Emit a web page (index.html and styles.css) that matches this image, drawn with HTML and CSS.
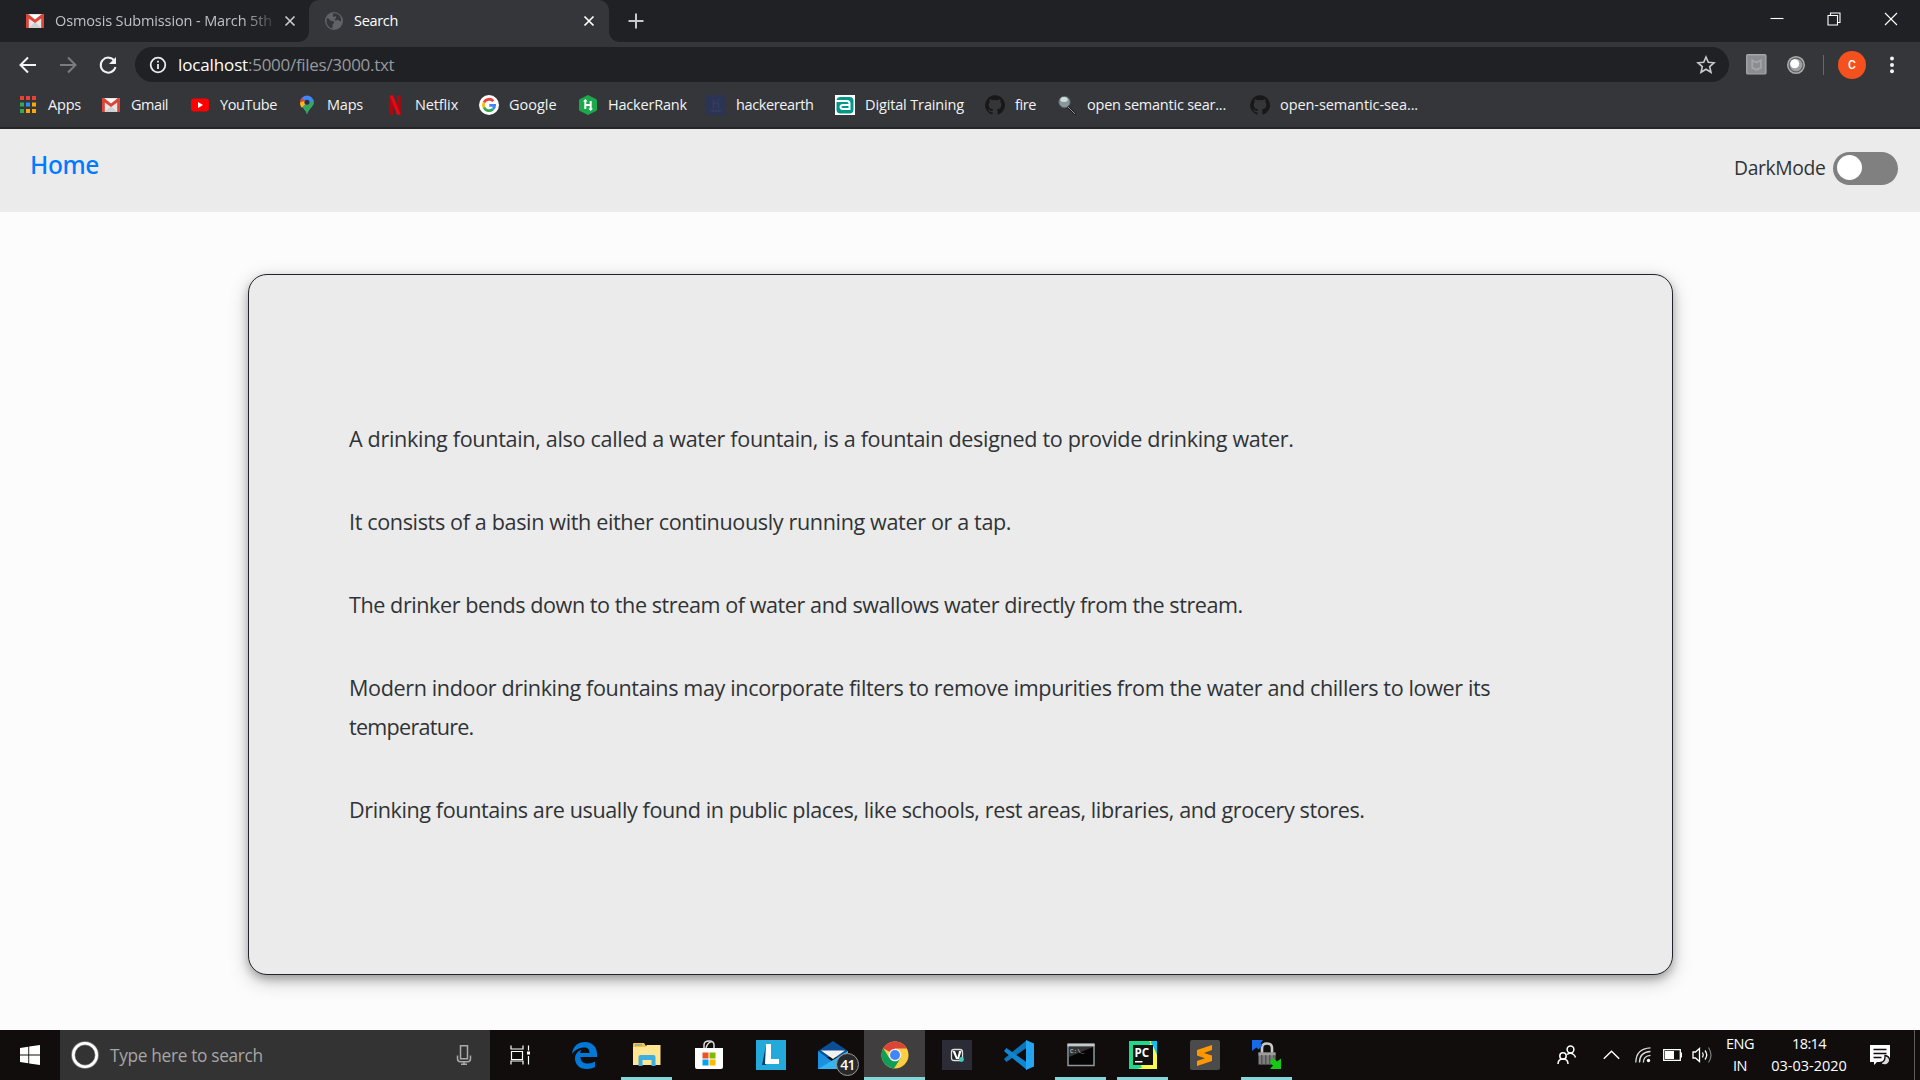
FILE: index.html
```html
<!DOCTYPE html>
<html lang="en">
<head>
<meta charset="utf-8">
<title>Search</title>
<link rel="stylesheet" href="styles.css">
</head>
<body>
<div class="screen">
  <div class="tabstrip">
    <div class="tab tab-idle">
      <svg class="tab-icon" viewBox="0 0 20 20"><use href="#gmail"/></svg>
      <span class="tab-title faded">Osmosis Submission - March 5th</span>
      <svg class="tab-close" viewBox="0 0 12 12"><path d="M1.5 1.5l9 9M10.5 1.5l-9 9"/></svg>
    </div>
    <div class="tab tab-active">
      <svg class="tab-icon globe" viewBox="0 0 20 20"><circle cx="10" cy="10" r="9" fill="#5f6368"/><path d="M3 7c3 0 2 3 5 3 2 0 3 2 1 3-1 1 0 3-1 4.500C3 16 1.800 11 3 7zM9 2.500c1 1-1 2 0 3 2 1 2-1 3 0 1 2-2 2-1 4 2 0 3-1 4 0l2 1C18 5 13 1.500 9 2.500z" fill="#35363a"/></svg>
      <span class="tab-title current">Search</span>
      <svg class="tab-close bright" viewBox="0 0 12 12"><path d="M1.500 1.500l9 9M10.500 1.500l-9 9"/></svg>
    </div>
    <svg class="new-tab" viewBox="0 0 16 16"><path d="M8 .5v15M.5 8h15"/></svg>
    <div class="window-buttons">
      <svg viewBox="0 0 14 14"><path d="M.5 6.500h13"/></svg>
      <svg viewBox="0 0 14 14"><path d="M1 3.500h9.500V13H1zM3.500 3.500V1H13v9.500h-2.500"/></svg>
      <svg viewBox="0 0 14 14"><path d="M1 1l12 12M13 1L1 13"/></svg>
    </div>
  </div>

  <div class="toolbar">
    <svg class="nav" viewBox="0 0 20 20"><path d="M18 10H3M10 2.500L2.500 10l7.500 7.500"/></svg>
    <svg class="nav disabled" viewBox="0 0 20 20"><path d="M2 10h15M10 2.500l7.500 7.500-7.500 7.500"/></svg>
    <svg class="nav" viewBox="0 0 20 20"><path d="M16.500 6A7.500 7.500 0 1 0 17.500 12"/><path d="M18 2v7h-7z" class="solid"/></svg>
    <div class="omnibox">
      <svg class="info" viewBox="0 0 18 18"><circle cx="9" cy="9" r="7.300"/><path d="M9 8v5M9 4.800v1.800"/></svg>
      <span class="url"><span class="host">localhost</span><span class="path">:5000/files/3000.txt</span></span>
      <svg class="star" viewBox="0 0 20 20"><path d="M10 2l2.300 5.300 5.700.5-4.300 3.800 1.300 5.700-5-3-5 3 1.300-5.700L2 7.800l5.700-.5z"/></svg>
    </div>
    <svg class="ext shield" viewBox="0 0 22 22"><rect x=".8" y=".8" width="20" height="20" rx="1" fill="#8b8d90" stroke="#a3a6a9" stroke-width="1.500"/><path d="M6.500 6.500L11 9l4.500-2.500v8L11 16.500l-4.500-2z" fill="none" stroke="#a3a7ab" stroke-width="1.800"/></svg>
    <svg class="ext orb" viewBox="0 0 20 20"><circle cx="10" cy="10" r="8.300" fill="#5f6063" stroke="#aaabad" stroke-width="1.500"/><circle cx="10" cy="10" r="6.300" fill="#a0a0a0"/><circle cx="8.700" cy="8.700" r="4.500" fill="#fff"/></svg>
    <span class="divider"></span>
    <span class="avatar">C</span>
    <svg class="menu" viewBox="0 0 6 20"><circle cx="3" cy="3.500" r="2"/><circle cx="3" cy="10" r="2"/><circle cx="3" cy="16.300" r="2"/></svg>
  </div>

  <div class="bookmarks">
    <div class="bm apps"><svg viewBox="0 0 20 20"><path fill="#ea4335" d="M2 1h4v4H2zM8 1h4v4H8zM14 1h4v4h-4z"/><path fill="#34a853" d="M2 7.500h4v4H2zM2 14h4v4H2z"/><path fill="#2b8cff" d="M8 7.500h4v4H8z"/><path fill="#fba706" d="M14 7.500h4v4h-4zM8 14h4v4H8zM14 14h4v4h-4z"/></svg><span>Apps</span></div>
    <div class="bm gmail"><svg viewBox="0 0 20 20"><g id="gmail"><rect x="1" y="3" width="18" height="14" rx="1.500" fill="#e6e6e6"/><path fill="#fff" d="M4 4h12l-6 6z"/><path fill="#cfcfcf" d="M4 17l6-6 6 6z"/><path fill="#dc4437" d="M1 4.500C1 3 2.500 2.500 3.500 3.300L10 8.500l6.500-5.200C17.500 2.500 19 3 19 4.500V17h-2.800V7.500L10 12 3.800 7.500V17H1z"/></g></svg><span>Gmail</span></div>
    <div class="bm youtube"><svg viewBox="0 0 20 20"><rect x="1" y="3.500" width="18" height="13" rx="3" fill="red"/><path fill="#fff" d="M8 7l5 3-5 3z"/></svg><span>YouTube</span></div>
    <div class="bm maps"><svg viewBox="0 0 20 20"><path fill="#4285f4" d="M10 .5A6.800 6.800 0 0 1 16.800 7.300C16.800 12 11 14 10 19.500 9 14 3.200 12 3.200 7.300A6.800 6.800 0 0 1 10 .5z"/><path fill="#ea4335" d="M4.800 3l3.500 3L10 7.300 3.200 9C2.900 6 3.500 4.500 4.800 3z"/><path fill="#fbbc04" d="M8 9.500l-3.200 3.200C3 10.500 3 9 3.200 7.500L7.500 6z"/><path fill="#34a853" d="M16.500 5.500c1.500 6-5.500 8-6.500 14-.5-3-2.500-5-4.500-7.200l5.500-3z"/><circle cx="10" cy="7.300" r="2.500" fill="#25324a"/></svg><span>Maps</span></div>
    <div class="bm netflix"><svg viewBox="0 0 20 20"><path fill="#b1060f" d="M4.500.5h3.700v19l-3.700.4zM12 .5h3.700v19.400L12 19.500z"/><path fill="#e50914" d="M4.500.5h3.700l7.500 19.400-3.700-.4z"/></svg><span>Netflix</span></div>
    <div class="bm google"><svg viewBox="0 0 20 20"><circle cx="10" cy="10" r="10" fill="#fff"/><g fill="none" stroke-width="2.800"><path stroke="#ea4335" d="M14.300 6.200A5.600 5.600 0 0 0 5 7.500"/><path stroke="#fbbc05" d="M5 7.500a5.600 5.600 0 0 0 0 5"/><path stroke="#34a853" d="M5 12.500a5.600 5.600 0 0 0 8.800 1.700"/><path stroke="#4285f4" d="M13.800 14.200a5 5 0 0 0 1.800-3.800H10.300"/></g></svg><span>Google</span></div>
    <div class="bm hackerrank"><svg viewBox="0 0 20 20"><path fill="#1ba94c" d="M10 0l8 4q1 .5 1 1.500v9q0 1-1 1.500l-8 4-8-4q-1-.5-1-1.500v-9Q1 4.500 2 4z"/><path fill="none" stroke="#fff" stroke-width="2" d="M7.300 5v9M12.700 6v9M7.300 10h5.400"/><path fill="#fff" d="M5 6.500L7.300 4l2.300 2.500zM10.400 13.500l2.300 2.500 2.300-2.500z"/></svg><span>HackerRank</span></div>
    <div class="bm hackerearth"><svg viewBox="0 0 20 20"><rect width="20" height="20" rx="2" fill="#2c3454"/><path d="M7.500 4.500v9M7.500 8.500q5-2 5 1v4M5 16h10M12.500 4v2" stroke="#343d60" stroke-width="1.500" fill="none"/></svg><span>hackerearth</span></div>
    <div class="bm digital"><svg viewBox="0 0 20 20"><rect width="20" height="20" fill="#fff"/><rect x="1.500" y="2" width="17" height="16.500" rx="4" fill="#009688"/><path d="M1 6h11q2.500 0 2.500 2.500V14H8q-2.500 0-2.500-2T8 10h6" fill="none" stroke="#fff" stroke-width="2"/></svg><span>Digital Training</span></div>
    <div class="bm fire"><svg viewBox="0 0 20 20"><path id="octocat" fill="#191717" d="M10 .3a9.900 9.900 0 0 0-3.100 19.300c.5.100.7-.2.700-.5v-1.800c-2.800.6-3.400-1.200-3.400-1.200-.5-1.200-1.100-1.500-1.100-1.500-.9-.6.100-.6.100-.6 1 .1 1.500 1 1.500 1 .9 1.600 2.400 1.100 2.900.8.100-.6.400-1 .6-1.300-2.200-.2-4.500-1.100-4.500-4.900 0-1.100.4-2 1-2.700-.1-.2-.4-1.200.1-2.600 0 0 .8-.3 2.700 1a9 9 0 0 1 5 0c1.900-1.300 2.700-1 2.700-1 .5 1.400.2 2.400.1 2.600.6.700 1 1.600 1 2.700 0 3.800-2.300 4.700-4.500 4.900.4.300.7.900.7 1.800v2.800c0 .3.200.6.700.5A9.900 9.900 0 0 0 10 .3z"/></svg><span>fire</span></div>
    <div class="bm semantic"><svg viewBox="0 0 20 20"><path d="M10.500 11.500l8 8" stroke="#17191b" stroke-width="2.200"/><path d="M10.500 11.500l7.500 7.500" stroke="#a8adb0" stroke-width=".9"/><circle cx="7.500" cy="7" r="5.700" fill="#88999c" stroke="#5a6265"/><ellipse cx="7" cy="4.500" rx="3.700" ry="2.500" fill="#cfdcde"/></svg><span>open semantic sear...</span></div>
    <div class="bm semantic-repo"><svg viewBox="0 0 20 20"><use href="#octocat"/></svg><span>open-semantic-sea...</span></div>
  </div>

  <header class="site-header">
    <a class="home">Home</a>
    <div class="mode"><span class="mode-label">DarkMode</span><span class="switch"><span class="knob"></span></span></div>
  </header>

  <main class="page">
    <article class="card">
      <p class="p1">A drinking fountain, also called a water fountain, is a fountain designed to provide drinking water.</p>
      <p class="p2">It consists of a basin with either continuously running water or a tap.</p>
      <p class="p3">The drinker bends down to the stream of water and swallows water directly from the stream.</p>
      <p class="p4">Modern indoor drinking fountains may incorporate filters to remove impurities from the water and chillers to lower its <span class="p4-end">temperature.</span></p>
      <p class="p5">Drinking fountains are usually found in public places, like schools, rest areas, libraries, and grocery stores.</p>
    </article>
  </main>

  <footer class="taskbar">
    <div class="start"><svg width="20" height="20" viewBox="0 0 20 20"><path fill="#fff" d="M0 3l8.300-1.200v7.800H0zM9.200 1.600L20 0v9.600H9.200zM0 10.500h8.300v7.800L0 17.100zM9.200 10.500H20V20L9.200 18.500z"/></svg></div>
    <div class="search-box">
      <svg width="28" height="28" viewBox="0 0 28 28"><circle cx="14" cy="14" r="11.800" fill="none" stroke="#888" stroke-width="4"/><circle cx="14" cy="14" r="11.700" fill="none" stroke="#fff" stroke-width="2.600"/></svg>
      <span class="placeholder">Type here to search</span>
      <svg class="mic" width="16" height="20" viewBox="0 0 16 20"><path d="M4.500.8h7v13h-7zM1.500 10.500v3.200q0 3 3 3h7q3 0 3-3v-3.200M8 16.700v2.500M5 19.200h6"/></svg>
    </div>
    <div class="task-view"><svg width="20" height="20" viewBox="0 0 20 20"><path d="M1 .5v3.500h12V.5M1.500 6.500h11v8h-11zM1 19.500v-3.500h12v3.500M18.500.5v5M18.500 11v8.500" fill="none" stroke="#fff" stroke-width="1.200"/><path d="M17 6.500h3v3h-3z" fill="#fff"/></svg></div>
    <div class="apps-row">
      <div class="app"><svg width="26" height="28" viewBox="0 0 26 28"><path fill="#0078d7" d="M0 13C1 5 6 1 13 1c8 0 12 6 12 12v3H8.500c0 5 3.500 6.500 7.500 6.500 3 0 5-.8 7-2V26c-2 1.200-5 2-8.500 2C7 28 3 23 3 17.500 3 13 6 10 9.500 8.500 8.700 9.500 8.300 10.500 8.200 12h9.300c0-4-2-5.500-5-5.500C7 6.500 3 9 0 13z"/></svg></div>
      <div class="app open"><svg width="30" height="26" viewBox="0 0 30 26"><path fill="#f5c24a" d="M1 2q0-1 1-1h10l2 3v4H1z"/><path fill="#4aa3df" d="M3 2.500h7v1H3z"/><path fill="#ffe692" d="M1 5h12l2-2h13.500v20H1z"/><path fill="#3daee0" d="M6.500 24V15q0-2 2-2h13q2 0 2 2v9h-4v-6h-9v6z"/></svg></div>
      <div class="app"><svg width="30" height="30" viewBox="0 0 30 30"><path d="M10 9V5q0-4 5-4t5 4v4M12 8q2-6 5-6" fill="none" stroke="#ddd" stroke-width="1.500"/><path fill="#fff" d="M1 8h28v19q0 2-2 2H3q-2 0-2-2z"/><path fill="#f25022" d="M8.500 12.500h6v6h-6z"/><path fill="#7fba00" d="M15.500 12.500h6v6h-6z"/><path fill="#00a4ef" d="M8.500 19.500h6v6h-6z"/><path fill="#ffb900" d="M15.500 19.500h6v6h-6z"/></svg></div>
      <div class="app"><svg width="30" height="30" viewBox="0 0 30 30"><path fill="#23aadb" d="M0 0h30v30H0z"/><path fill="#063b73" d="M10 5L6 25h4z"/><path fill="#fff" d="M10 4h5v15h8v5H9z"/></svg></div>
      <div class="app mail"><svg width="30" height="30" viewBox="0 0 30 30"><path fill="#0a4f96" d="M0 11L15 1l15 10v6H0z"/><path fill="#1b8fe0" d="M0 11l15 11 15-11v18H0z"/><path fill="#36b4f0" d="M0 29L30 11v18z"/><path fill="#f2f2f2" d="M3 10.500h24L15 19z"/></svg><span class="badge">41</span></div>
      <div class="app open focused"><svg width="28" height="28" viewBox="0 0 28 28"><circle cx="14" cy="14" r="13.500" fill="#ffcd40"/><path fill="#db4437" d="M14 14L2.300 7.200A13.500 13.500 0 0 1 25.700 7.500H14z"/><path fill="#0f9d58" d="M2.300 7.200A13.500 13.500 0 0 0 13 27.500l6.500-10.300L14 14l-5.600 3.200z"/><circle cx="14" cy="14" r="6.300" fill="#f1f1f1"/><circle cx="14" cy="14" r="5" fill="#4285f4"/></svg></div>
      <div class="app"><svg width="30" height="30" viewBox="0 0 30 30"><path fill="#2b2c36" d="M0 0h30v30H0z"/><rect x="9.500" y="9.500" width="11" height="11" rx="2.500" fill="#222" stroke="#ddd" stroke-width="1.300"/><path d="M10.500 11h2.500l2.500 6.500L17 11h2.500L17 19h-3z" fill="#fff"/><circle cx="19.500" cy="19.500" r="2.400" fill="#3ccfc0"/></svg></div>
      <div class="app"><svg width="30" height="30" viewBox="0 0 30 30"><path fill="#0b76be" d="M0 19l2.500 3L23 7.500V0L1 18z"/><path fill="#1186d0" d="M0 11l2.500-3L23 22.500V30L1 12z"/><path fill="#24a5f2" d="M22 0l8 3.500v23L22 30z"/></svg></div>
      <div class="app open"><svg width="28" height="24" viewBox="0 0 28 24"><path d="M1 1.500h26v21H1z" fill="#050505" stroke="#8f969a" stroke-width="1.500"/><path fill="#c3cace" d="M.5.500h27v3H.5z"/><path fill="#333" d="M2 4h24L2 14z"/><text x="3" y="9.500" class="prompt">C:\_</text></svg></div>
      <div class="app open"><svg width="28" height="28" viewBox="0 0 28 28"><path fill="#21d789" d="M0 0h28v28H0z"/><path fill="#fcf84a" d="M15 0h8L4 28h24V9L20 0z"/><path fill="#07c3f2" d="M22 0h6v14z"/><path fill="#21d789" d="M0 28V4l14 24z"/><path fill="#fcf84a" d="M8 28l20-6v6z"/><path fill="#111" d="M4 4h20v20H4z"/><text x="5.500" y="16" class="pc">PC</text><path fill="#fff" d="M6 20h7.500v1.500H6z"/></svg></div>
      <div class="app"><svg width="30" height="30" viewBox="0 0 30 30"><rect width="30" height="30" rx="2" fill="#4b4b4b"/><path fill="#ff9800" d="M7 10l15-5v5l-8 3 8 2.500V21L7 26v-5l8-2.800L7 15.500z"/></svg></div>
      <div class="app open"><svg width="30" height="30" viewBox="0 0 30 30"><path d="M10 14V8q0-4.500 5-4.500T20 8v6" fill="none" stroke="#c9c9c9" stroke-width="2.600"/><path fill="#7d7d7d" d="M6.500 12.500h17v12h-17z"/><path fill="#9c9c9c" d="M6.500 12.500h17v3h-17z"/><path fill="#565656" d="M9 15h1.500v9.500H9zM13 15h1.500v9.500H13zM17 15h1.500v9.500H17zM21 15h1.500v9.500H21z"/><path fill="#176be8" d="M0 0h11L8.500 3.500l2 2-4 4-2-2L0 11z"/><path fill="#16c916" d="M29 29H18l3-3.500-3.500-3.500 4-4 3.500 3.500 4-3z"/></svg></div>
    </div>
    <div class="tray">
      <svg class="people" width="20" height="20" viewBox="0 0 20 20"><g fill="none" stroke="#fff" stroke-width="1.500"><circle cx="13.500" cy="4.500" r="3.400"/><circle cx="6" cy="11" r="3.200"/><path d="M1 19q0-5 5-5t5 5M10 9.500q3.500-2.500 6.500 0 1.500 1 2 3"/></g></svg>
      <svg class="chevron" width="17" height="10" viewBox="0 0 17 10"><path d="M.8 8.800l7.700-7.600 7.700 7.600" fill="none" stroke="#fff" stroke-width="1.400"/></svg>
      <svg class="wifi" width="16" height="16" viewBox="0 0 16 16"><g fill="none" stroke="#ddd" stroke-width="1.300"><path d="M.8 15.500Q1 1.500 15.500.8M4.500 15.500Q4.500 5 15.500 4.500M8.300 15.500Q8.500 8.800 15.500 8.300"/></g><circle cx="13.500" cy="13.500" r="1.700" fill="#fff"/></svg>
      <svg class="battery" width="20" height="12" viewBox="0 0 20 12"><path d="M.7.700h16.600v10.600H.7z" fill="none" stroke="#fff" stroke-width="1.300"/><path fill="#fff" d="M2 2h9v8H2zM17.500 3.500H19v5h-1.500z"/></svg>
      <svg class="volume" width="21" height="18" viewBox="0 0 21 18"><g fill="none" stroke="#fff" stroke-width="1.300"><path d="M1 6h2.500L7.500 2.500v13L3.500 12H1zM10.500 6.500q1.500 2.500 0 5M13 4.500q3.500 4.500 0 9"/><path stroke="#777" d="M16.500 1.500q5 7.500 0 15"/></g></svg>
      <div class="lang"><span class="eng">ENG</span><span>IN</span></div>
      <div class="clock"><span class="time">18:14</span><span>03-03-2020</span></div>
      <svg class="notice" width="21" height="21" viewBox="0 0 21 21"><path fill="#fff" d="M0 0h20v17H7l-3 3v-3H0z"/><path d="M3.500 4.500h13M3.500 8.500h13M3.500 12.500h8" stroke="#120d0d" stroke-width="1.300"/><path d="M15 10.500q4 .5 4.800 4.500-.8 5-5.800 5-2.500-.5-3.500-2.500 5-.5 4.500-7z" fill="#ddd" stroke="#120d0d" stroke-width="1.300"/></svg>
      <span class="show-desktop"></span>
    </div>
  </footer>
</div>
</body>
</html>
```
FILE: styles.css
```css
* { box-sizing: border-box; }
body { margin: 0; font-family: "Open Sans", sans-serif; color: #303336; }
svg { display: block; flex: none; }
span { white-space: nowrap; }

.screen { display: grid; grid-template-rows: 42px 44px 43px 83px 818px 50px; width: 1920px; height: 1080px; overflow: hidden; background: #fcfcfc; }

/* Tabs */
.tabstrip { display: flex; align-items: center; background: #202124; }
.tab { display: flex; align-items: center; height: 42px; font-size: 14.5px; }
.tab-idle { width: 309px; padding: 0 13px 0 25px; color: #bdc1c6; }
.tab-active { position: relative; width: 300px; padding: 0 14px 0 15px; background: #35363a; border-radius: 10px 10px 0 0; color: #fff; }
.tab-active::before, .tab-active::after { content: ""; position: absolute; bottom: 0; width: 10px; height: 10px; }
.tab-active::before { left: -10px; background: radial-gradient(circle at 0 0, transparent 9.5px, #35363a 10px); }
.tab-active::after { right: -10px; background: radial-gradient(circle at 100% 0, transparent 9.5px, #35363a 10px); }
.tab-icon { width: 20px; height: 20px; margin-right: 10px; }
.tab-title { flex: 1; overflow: hidden; line-height: 22px; }
.faded { letter-spacing: -.12px; -webkit-mask-image: linear-gradient(90deg, #000 188px, transparent 224px); mask-image: linear-gradient(90deg, #000 188px, transparent 224px); }
.current { letter-spacing: -.32px; }
.tab-close { width: 12px; height: 12px; stroke: #c7cacd; stroke-width: 1.7; }
.bright { stroke: #fff; }
.new-tab { width: 16px; height: 16px; margin-left: 19px; stroke: #c7cacd; stroke-width: 2; }
.window-buttons { display: flex; gap: 43px; margin: 0 22px 5px auto; }
.window-buttons svg { width: 14px; height: 14px; fill: none; stroke: #fff; stroke-width: 1.1; }

/* Address bar */
.toolbar { display: flex; align-items: center; padding: 1px 24px 0 18px; background: #35363a; }
.nav { width: 20px; height: 20px; margin-right: 20px; fill: none; stroke: #f1f3f4; stroke-width: 2; }
.nav .solid { fill: #f1f3f4; stroke: none; }
.disabled { stroke: #7b7c7f; }
.omnibox { display: flex; align-items: center; width: 1594px; height: 35px; margin-left: -3px; padding: 0 13px 0 14px; border-radius: 18px; background: #202124; font-size: 17px; }
.info { width: 18px; height: 18px; fill: none; stroke: #e8eaed; stroke-width: 1.8; }
.url { flex: 1; margin-left: 11px; line-height: 24px; }
.host { color: #fff; letter-spacing: -.13px; }
.path { color: #969a9f; letter-spacing: -.29px; }
.star { width: 20px; height: 20px; fill: none; stroke: #c8cacd; stroke-width: 1.6; }
.ext { width: 21px; height: 21px; }
.shield { margin-left: 17px; }
.orb { width: 20px; height: 20px; margin-left: 19px; }
.divider { width: 1px; height: 20px; margin-left: 17px; background: #66686b; }
.avatar { display: grid; place-items: center; width: 28px; height: 28px; margin-left: 14px; border-radius: 50%; background: #f4511e; color: #fff; font: 500 12px Roboto, sans-serif; }
.menu { width: 6px; height: 20px; margin-left: 23px; fill: #f1f3f4; }

/* Bookmarks */
.bookmarks { display: flex; padding: 9px 0 0 18px; background: #35363a; border-bottom: 2px solid #252629; color: #f1f3f4; font-size: 14.5px; }
.bm { display: flex; gap: 10px; height: 20px; line-height: 20px; flex: none; }
.bm svg { width: 20px; height: 20px; }
.apps { width: 83px; letter-spacing: -.2px; }
.gmail { width: 89px; letter-spacing: -.46px; }
.youtube { width: 107px; letter-spacing: -.38px; }
.maps { width: 88px; letter-spacing: -.23px; }
.netflix { width: 94px; letter-spacing: -.13px; }
.google { width: 99px; }
.hackerrank { width: 128px; letter-spacing: -.19px; }
.hackerearth { width: 129px; letter-spacing: -.39px; }
.digital { width: 150px; letter-spacing: -.14px; }
.fire { width: 72px; letter-spacing: -.4px; }
.semantic { width: 193px; letter-spacing: -.23px; }
.semantic-repo { width: 180px; letter-spacing: -.08px; }

/* Site header */
.site-header { display: flex; justify-content: space-between; padding: 0 22px 0 30px; background: #ebebeb; }
.home { margin-top: 19px; color: #007bff; font: 500 24.5px/34px "Noto Sans", sans-serif; letter-spacing: -.4px; }
.mode { display: flex; height: 33px; margin-top: 23px; }
.mode-label { width: 99px; font-size: 19.3px; line-height: 31px; letter-spacing: -.35px; }
.switch { display: flex; width: 65px; height: 33px; padding: 3px 4px; border-radius: 17px; background: #808080; }
.knob { width: 25px; height: 25px; border-radius: 50%; background: #fff; }

/* File text */
.page { padding: 62px 247px 0 248px; }
.card { height: 701px; padding: 144px 100px 0; border: 1px solid #212529; border-radius: 19px; background: #ebebeb; box-shadow: 0 4px 8px rgba(0, 0, 0, .25), 0 6px 20px rgba(0, 0, 0, .22); font-size: 21.6px; line-height: 39px; }
.card p { margin: 0 0 44px; }
.p1 { letter-spacing: -.33px; }
.p2 { letter-spacing: -.37px; }
.p3 { letter-spacing: -.44px; }
.p4 { letter-spacing: -.38px; }
.p4-end { letter-spacing: -.75px; }
.p5 { letter-spacing: -.41px; }

/* Taskbar */
.taskbar { display: flex; background: #100d0c; color: #fff; }
.start { display: grid; place-items: center; width: 60px; }
.search-box { display: flex; align-items: center; width: 430px; padding: 0 18px 0 11px; background: #333; }
.placeholder { flex: 1; margin-left: 11px; color: #a6a6a6; font-size: 17.3px; letter-spacing: -.33px; }
.mic { fill: none; stroke: #aaa; stroke-width: 1.5; }
.task-view { display: grid; place-items: center; width: 60px; }
.apps-row { display: flex; gap: 1px; margin-left: 4px; }
.app { position: relative; display: grid; place-items: center; width: 61px; height: 50px; }
.open::after { content: ""; position: absolute; left: 5px; right: 5px; bottom: 0; height: 3px; background: #83d6da; }
.focused { background: #403e3e; }
.focused::after { left: 0; right: 0; }
.badge { position: absolute; left: 34px; top: 23px; display: grid; place-items: center; width: 23px; height: 23px; border: 1px solid #999; border-radius: 50%; background: #292929; font-size: 14px; font-weight: 600; letter-spacing: -.8px; }
.prompt { font: 6px "Liberation Mono", monospace; fill: #ddd; }
.pc { font: bold 11.5px "Open Sans", sans-serif; fill: #fff; }
.tray { display: flex; flex: 1; align-items: center; font-size: 14.5px; }
.people { margin-left: 260px; }
.chevron { margin-left: 26px; }
.wifi { margin-left: 15px; }
.battery { margin-left: 12px; }
.volume { margin-left: 9px; }
.lang, .clock { display: flex; flex-direction: column; align-items: center; line-height: 22px; }
.lang { width: 30px; margin-left: 12px; letter-spacing: -.5px; }
.clock { width: 78px; margin-left: 15px; }
.time { letter-spacing: -.6px; }
.notice { margin-left: 22px; }
.show-desktop { width: 1px; height: 50px; margin: 0 5px 0 auto; background: #5d5b5b; }
```
